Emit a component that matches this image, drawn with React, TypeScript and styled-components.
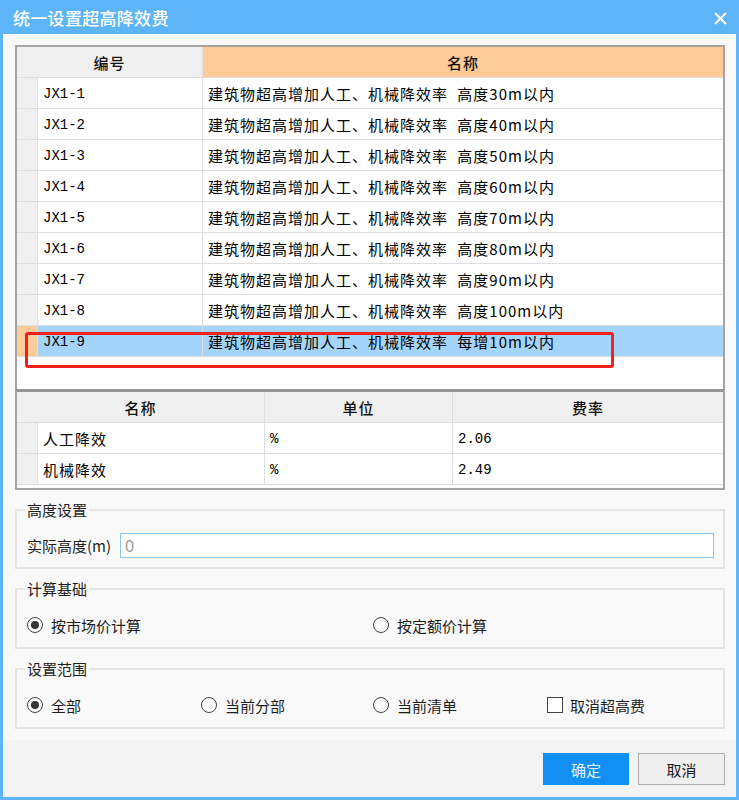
import styled, { createGlobalStyle } from 'styled-components'

const GlobalStyle = createGlobalStyle`
  html, body {
    margin: 0;
    padding: 0;
    background: #fff;
  }
  body {
    font-family: "Noto Sans CJK SC", "Noto Sans", sans-serif;
  }
  * {
    box-sizing: border-box;
  }
`

const Window = styled.div`
  width: 739px;
  height: 800px;
  display: flex;
  flex-direction: column;
  background: #5db4f6;
  padding: 0 3px 3px 3px;
`

const TitleBar = styled.div`
  height: 34px;
  display: flex;
  align-items: center;
  justify-content: space-between;
  padding: 0 9px 0 10px;
  color: #fff;
`

const Title = styled.div`
  font-size: 17px;
  font-weight: 500;
  letter-spacing: 0.3px;
`

const CloseButton = styled.button`
  width: 14px;
  height: 14px;
  padding: 0;
  border: none;
  background: none;
  display: flex;
  align-items: center;
  justify-content: center;
  margin-top: 2px;
`

const Body = styled.div`
  flex: 1;
  display: flex;
  flex-direction: column;
  background: #f9f9f9;
`

const Main = styled.div`
  padding: 11px 11px 0 12px;
`

const ListFrame = styled.div`
  position: relative;
  height: 344px;
  border: 2px solid #a4a4a4;
  border-bottom: none;
  background: #fff;
`

const DetailFrame = styled.div`
  border: 2px solid #a4a4a4;
  border-top: 3px solid #959595;
  background: #fff;
  padding-bottom: 3px;
`

const Row = styled.div<{ $cols: string }>`
  display: grid;
  grid-template-columns: ${(p) => p.$cols};
  height: 31px;
  border-bottom: 1px solid #dedede;
`

const HeadCell = styled.div<{ $bg?: string; $span?: number }>`
  grid-column: span ${(p) => p.$span || 1};
  display: flex;
  align-items: center;
  justify-content: center;
  background: ${(p) => p.$bg || '#f0f0f0'};
  border-right: 1px solid #dedede;
  font-size: 15px;
  font-weight: 500;
  letter-spacing: 1px;
  color: #111;
  &:last-child {
    border-right: none;
  }
`

const Indicator = styled.div<{ $active?: boolean }>`
  background: ${(p) => (p.$active ? '#ffcc99' : '#f0f0f0')};
  border-right: 1px solid #dedede;
`

const Cell = styled.div<{ $active?: boolean; $mono?: boolean }>`
  display: flex;
  align-items: center;
  padding-left: 5px;
  padding-top: ${(p) => (p.$mono ? '2px' : '0')};
  background: ${(p) => (p.$active ? '#a5d4fb' : '#fff')};
  border-right: 1px solid #dedede;
  color: #000;
  white-space: nowrap;
  font-family: ${(p) => (p.$mono ? '"Liberation Mono", monospace' : '"Noto Sans CJK SC", sans-serif')};
  font-size: ${(p) => (p.$mono ? '14px' : '15px')};
  letter-spacing: ${(p) => (p.$mono ? '0' : '1px')};
  word-spacing: 5px;
  &:last-child {
    border-right: none;
  }
`

const Highlight = styled.div`
  position: absolute;
  left: 8px;
  top: 285px;
  width: 589px;
  height: 36px;
  border: 3px solid #f3201c;
  border-radius: 3px;
  pointer-events: none;
`

const Group = styled.fieldset`
  margin: 10px 0 0;
  padding: 13px 9px 9px 8px;
  border: 2px solid #e4e4e4;
  min-width: 0;
`

const Legend = styled.legend`
  padding: 0 2px;
  font-size: 15px;
  line-height: 20px;
  color: #1e1e1e;
`

const FieldRow = styled.div`
  display: flex;
  align-items: center;
  gap: 9px;
  padding-left: 2px;
  font-size: 15px;
  color: #1e1e1e;
`

const TextInput = styled.input`
  flex: 1;
  height: 25px;
  border: 1px solid #8cc5f1;
  background: #fff;
  padding: 0 4px;
  font-family: "Noto Sans", sans-serif;
  font-size: 16px;
  color: #9a9a9a;
  outline: none;
`

const OptionGrid = styled.div`
  display: grid;
  grid-template-columns: 174px 172px 174px 174px;
  height: 26px;
  align-items: center;
  padding-left: 2px;
`

const Option = styled.label<{ $col?: number }>`
  grid-column: ${(p) => p.$col || 'auto'};
  display: flex;
  align-items: center;
  gap: 8px;
  font-size: 15px;
  color: #1e1e1e;
`

const RadioMark = styled.span<{ $checked?: boolean }>`
  width: 16px;
  height: 16px;
  border-radius: 50%;
  border: 1.5px solid #444;
  background: #fff;
  display: flex;
  align-items: center;
  justify-content: center;
  &::after {
    content: '';
    width: 8px;
    height: 8px;
    border-radius: 50%;
    background: ${(p) => (p.$checked ? '#333' : 'transparent')};
  }
`

const CheckMark = styled.span`
  width: 16px;
  height: 16px;
  border: 1.5px solid #444;
  background: #fff;
  margin-right: -1px;
`

const Footer = styled.div`
  flex: 1;
  margin-top: 11px;
  background: #f3f3f3;
  display: flex;
  justify-content: flex-end;
  align-items: flex-start;
  gap: 9px;
  padding: 13px 11px 0 0;
`

const Button = styled.button<{ $primary?: boolean }>`
  width: ${(p) => (p.$primary ? '86px' : '87px')};
  height: 32px;
  font-family: "Noto Sans CJK SC", sans-serif;
  font-size: 15px;
  border: 1px solid ${(p) => (p.$primary ? '#1190f4' : '#adadad')};
  background: ${(p) => (p.$primary ? '#1190f4' : '#efefef')};
  color: ${(p) => (p.$primary ? '#e8f3ff' : '#1a1a1a')};
`

const heights = ['30m', '40m', '50m', '60m', '70m', '80m', '90m', '100m']
const items = [
  ...heights.map((h, i) => ({ code: `JX1-${i + 1}`, name: `建筑物超高增加人工、机械降效率 高度${h}以内` })),
  { code: 'JX1-9', name: '建筑物超高增加人工、机械降效率 每增10m以内' },
]

const rates = [
  { name: '人工降效', unit: '%', rate: '2.06' },
  { name: '机械降效', unit: '%', rate: '2.49' },
]

const listCols = '21px 165px 1fr'
const detailCols = '21px 227px 188px 1fr'

export default function App() {
  return (
    <>
      <GlobalStyle />
      <Window>
        <TitleBar>
          <Title>统一设置超高降效费</Title>
          <CloseButton aria-label="关闭">
            <svg width="13" height="13" viewBox="0 0 13 13">
              <path d="M1 1 L12 12 M12 1 L1 12" stroke="#fff" strokeWidth="2" fill="none" />
            </svg>
          </CloseButton>
        </TitleBar>
        <Body>
          <Main>
            <ListFrame>
              <Row $cols={listCols}>
                <HeadCell $span={2}>编号</HeadCell>
                <HeadCell $bg="#ffcb98">名称</HeadCell>
              </Row>
              {items.map((it, i) => {
                const active = i === items.length - 1
                return (
                  <Row key={it.code + i} $cols={listCols}>
                    <Indicator $active={active} />
                    <Cell $active={active} $mono>
                      {it.code}
                    </Cell>
                    <Cell $active={active}>{it.name}</Cell>
                  </Row>
                )
              })}
              <Highlight />
            </ListFrame>
            <DetailFrame>
              <Row $cols={detailCols}>
                <HeadCell $span={2}>名称</HeadCell>
                <HeadCell>单位</HeadCell>
                <HeadCell>费率</HeadCell>
              </Row>
              {rates.map((r) => (
                <Row key={r.name} $cols={detailCols}>
                  <Indicator />
                  <Cell>{r.name}</Cell>
                  <Cell $mono>{r.unit}</Cell>
                  <Cell $mono>{r.rate}</Cell>
                </Row>
              ))}
            </DetailFrame>

            <Group>
              <Legend>高度设置</Legend>
              <FieldRow>
                <span>实际高度(m)</span>
                <TextInput defaultValue="0" />
              </FieldRow>
            </Group>

            <Group>
              <Legend>计算基础</Legend>
              <OptionGrid>
                <Option>
                  <RadioMark $checked />
                  按市场价计算
                </Option>
                <Option $col={3}>
                  <RadioMark />
                  按定额价计算
                </Option>
              </OptionGrid>
            </Group>

            <Group>
              <Legend>设置范围</Legend>
              <OptionGrid>
                <Option>
                  <RadioMark $checked />
                  全部
                </Option>
                <Option>
                  <RadioMark />
                  当前分部
                </Option>
                <Option>
                  <RadioMark />
                  当前清单
                </Option>
                <Option>
                  <CheckMark />
                  取消超高费
                </Option>
              </OptionGrid>
            </Group>
          </Main>
          <Footer>
            <Button $primary>确定</Button>
            <Button>取消</Button>
          </Footer>
        </Body>
      </Window>
    </>
  )
}
